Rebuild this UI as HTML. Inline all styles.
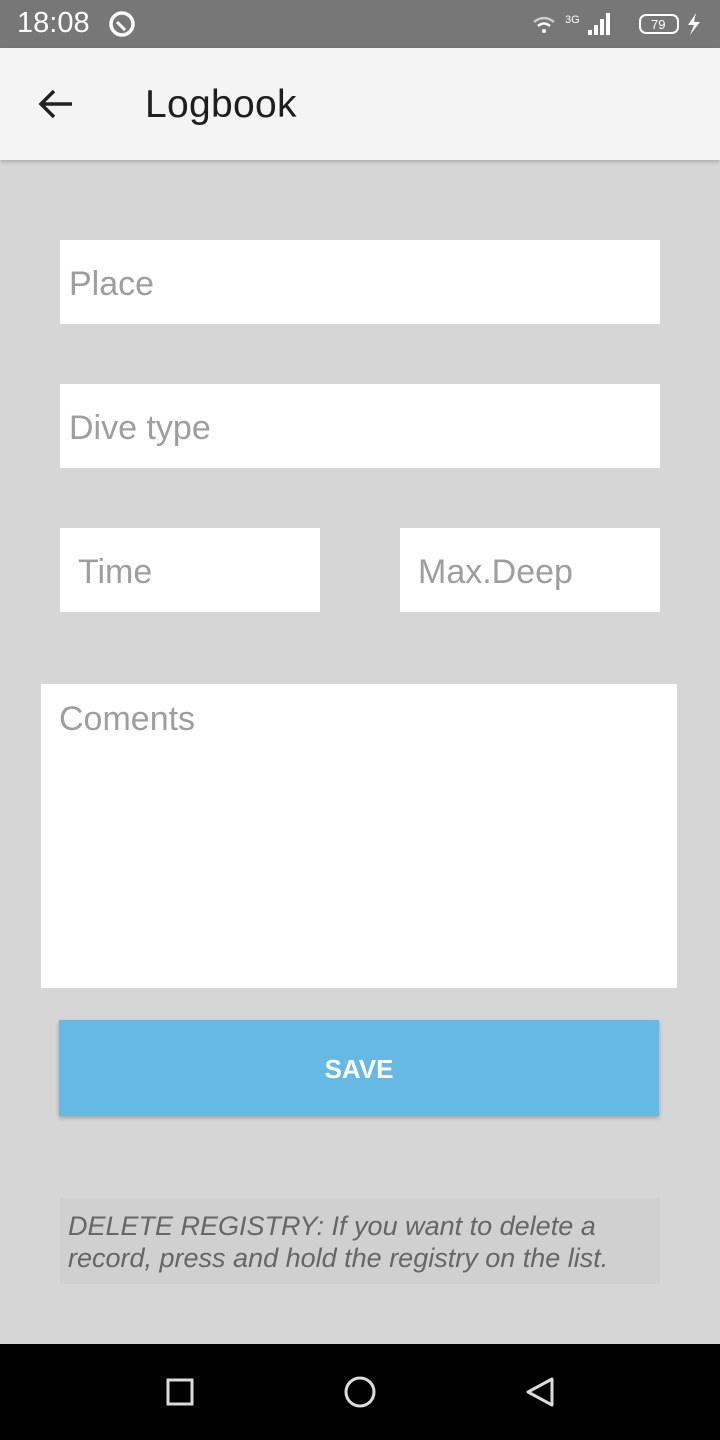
<!DOCTYPE html>
<html><head><meta charset="utf-8"><style>
*{margin:0;padding:0;box-sizing:border-box}
body{width:720px;height:1440px;background:#d6d6d6;font-family:"Liberation Sans",sans-serif;position:relative;overflow:hidden}
.abs{position:absolute}
.sb{left:0;top:0;width:720px;height:48px;background:#777;color:#fff}
.tb{left:0;top:48px;width:720px;height:112px;background:#f4f4f4;box-shadow:0 2px 4px rgba(0,0,0,.2)}
.f{background:#fff;color:#9e9e9e;font-size:34px}
.nav{left:0;top:1344px;width:720px;height:96px;background:#000}
</style></head><body>
<div class="abs sb">
<div class="abs" style="left:17px;top:7px;font-size:29px">18:08</div>
<svg class="abs" style="left:108px;top:10px" width="28" height="28"><circle cx="14" cy="14" r="11" fill="none" stroke="#fff" stroke-width="3.5"/><path d="M9 12 L17 20" stroke="#fff" stroke-width="3"/></svg>
<svg class="abs" style="left:530px;top:10px" width="180" height="28">
<path d="M4 12 Q14 4 24 12" stroke="#ccc" stroke-width="2.5" fill="none"/><path d="M8 16 Q14 11 20 16" stroke="#fff" stroke-width="2.5" fill="none"/><circle cx="14" cy="21" r="2" fill="#fff"/>
<text x="35" y="13" font-size="11" fill="#fff" font-family="Liberation Sans">3G</text>
<rect x="58" y="20" width="4" height="5" fill="#fff"/><rect x="64" y="15" width="4" height="10" fill="#fff"/><rect x="70" y="9" width="4" height="16" fill="#fff"/><rect x="76" y="3" width="4" height="22" fill="#fff"/>
<rect x="110" y="5" width="38" height="18" rx="6" fill="none" stroke="#fff" stroke-width="2"/><text x="121" y="19" font-size="13" fill="#fff" font-family="Liberation Sans">79</text>
<path d="M166 3 L158 15 H164 L160 25 L170 12 H164 Z" fill="#fff"/>
</svg>
</div>
<div class="abs tb">
<svg class="abs" style="left:38px;top:40px" width="36" height="32"><path d="M34 16 H4 M16 3 L3 16 L16 29" stroke="#222" stroke-width="3.5" fill="none"/></svg>
<div class="abs" style="left:145px;top:35px;font-size:39px;color:#1e1e1e;letter-spacing:0.3px">Logbook</div>
</div>
<div class="abs f" style="left:60px;top:240px;width:600px;height:84px;padding:25px 9px">Place</div>
<div class="abs f" style="left:60px;top:384px;width:600px;height:84px;padding:25px 9px">Dive type</div>
<div class="abs f" style="left:60px;top:528px;width:260px;height:84px;padding:25px 18px">Time</div>
<div class="abs f" style="left:400px;top:528px;width:260px;height:84px;padding:25px 18px">Max.Deep</div>
<div class="abs f" style="left:41px;top:684px;width:636px;height:304px;padding:16px 18px">Coments</div>
<div class="abs" style="left:59px;top:1020px;width:600px;height:96px;background:#66b9e3;box-shadow:0 2px 4px rgba(0,0,0,.25);color:#fff;font-weight:bold;font-size:26px;text-align:center;line-height:98px">SAVE</div>
<div class="abs" style="left:60px;top:1198px;width:600px;height:86px;background:#d0d0d0;color:#666;font-style:italic;font-size:27px;line-height:32px;padding:12px 8px;white-space:nowrap">DELETE REGISTRY: If you want to delete a<br>record, press and hold the registry on the list.</div>
<div class="abs nav">
<svg class="abs" style="left:160px;top:28px" width="400" height="40"><rect x="8" y="8" width="24" height="24" fill="none" stroke="#ddd" stroke-width="3"/><circle cx="200" cy="20" r="14" fill="none" stroke="#ddd" stroke-width="3"/><path d="M392 7 L368 20 L392 33 Z" fill="none" stroke="#ddd" stroke-width="3" stroke-linejoin="round"/></svg>
</div>
</body></html>
